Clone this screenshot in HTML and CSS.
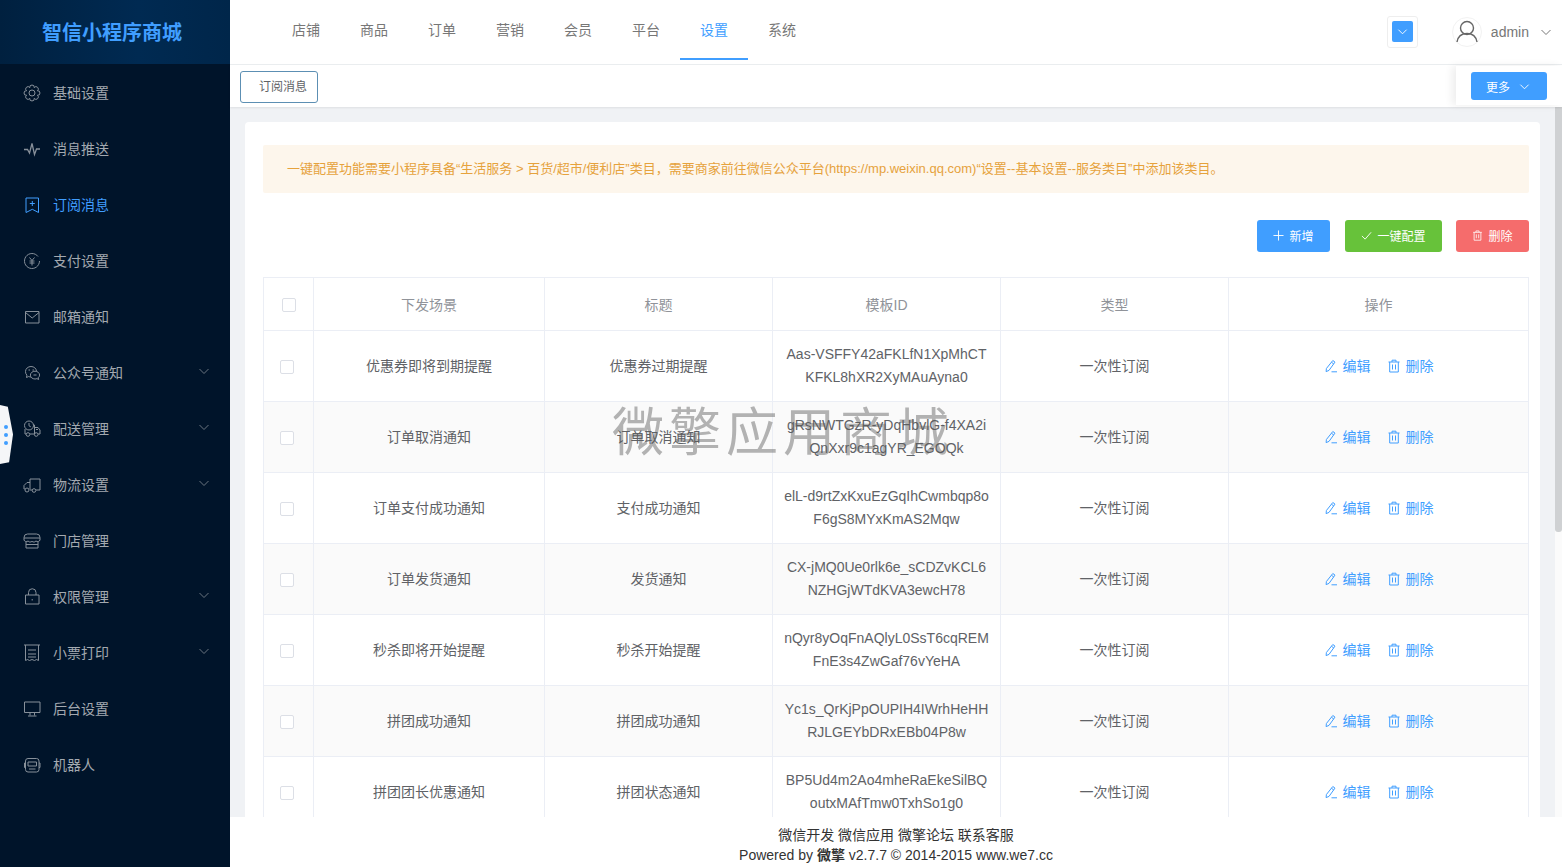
FILE: index.html
```html
<!DOCTYPE html>
<html lang="en">
<head>
    <meta charset="UTF-8">
    <title>订阅消息</title>
    <link rel="stylesheet" href="styles.css">
</head>
<body>
    <!-- Shared icons -->
    <svg class="defs" width="0" height="0">
        <symbol id="i-chev" viewBox="0 0 12 12"><path d="M1.500 4l4.500 4.500L10.500 4" fill="none" stroke="currentColor"/></symbol>
        <symbol id="i-edit" viewBox="0 0 14 14"><path d="M8.800 1.500l2.200 1.600-6 8.300-2.900 1.200.3-3.100zM7.500 3.300l2.200 1.600M7.500 12.800h5.500" fill="none" stroke="currentColor"/></symbol>
        <symbol id="i-trash" viewBox="0 0 14 14"><path d="M1.500 3h11M5 3V1.200h4V3M2.700 3v10h8.600V3M5.500 5.500v5M8.500 5.500v5" fill="none" stroke="currentColor"/></symbol>
    </svg>

    <!-- Sidebar -->
    <aside class="sidebar">
        <div class="logo">智信小程序商城</div>
        <ul class="side-menu">
            <li class="side-item">
                <svg class="side-icon" viewBox="0 0 18 18"><path d="M6.780 3.640A2.250 2.250 0 1 1 11.220 3.640 2.250 2.250 0 1 1 14.360 6.780 2.250 2.250 0 1 1 14.360 11.220 2.250 2.250 0 1 1 11.220 14.360 2.250 2.250 0 1 1 6.780 14.360 2.250 2.250 0 1 1 3.640 11.220 2.250 2.250 0 1 1 3.640 6.780 2.250 2.250 0 1 1 6.780 3.640z"/><circle cx="9" cy="9" r="3"/></svg>
                <span>基础设置</span>
            </li>
            <li class="side-item">
                <svg class="side-icon" viewBox="0 0 18 18"><path d="M1 9.500h3.500L6.500 13l2.500-9.500 2.500 11 2-5.500H17" stroke-width="1.300"/></svg>
                <span>消息推送</span>
            </li>
            <li class="side-item active">
                <svg class="side-icon" viewBox="0 0 18 18"><path d="M3 2h12.500v14.500l-6.200-3.200L3 16.500zM9.300 5v5M6.800 7.500h5"/></svg>
                <span>订阅消息</span>
            </li>
            <li class="side-item">
                <svg class="side-icon" viewBox="0 0 18 18"><path d="M15 4.500a7.500 7.500 0 1 0 1.500 4.500M6.500 5.500L9 8.500l2.500-3M6.500 9h5M6.500 11h5M9 8.500v5"/></svg>
                <span>支付设置</span>
            </li>
            <li class="side-item">
                <svg class="side-icon" viewBox="0 0 18 18"><path d="M2.500 3.500h13.500v11.500H2.500zM2.500 4.500l6.700 5.500 6.800-5.500"/></svg>
                <span>邮箱通知</span>
            </li>
            <li class="side-item">
                <svg class="side-icon" viewBox="0 0 18 18"><path d="M8 13a5.500 5.500 0 0 1-2.300-.5L3.500 13.500l.4-2.300A5.300 5.300 0 0 1 2.500 7.500C2.500 4.700 5 2.500 8 2.500s5.300 2 5.500 4.600"/><path d="M12 7.200c-2.500 0-4.600 1.700-4.600 3.900s2.100 3.900 4.600 3.900c.7 0 1.300-.1 1.900-.4l1.700.9-.4-1.800c.9-.7 1.400-1.600 1.400-2.600 0-2.200-2.100-3.900-4.600-3.900zM5.500 6h1.500M9.500 6H11M10.500 11h3"/></svg>
                <span>公众号通知</span>
                <svg class="side-chev"><use href="#i-chev"/></svg>
            </li>
            <li class="side-item">
                <svg class="side-icon" viewBox="0 0 18 18"><circle cx="6" cy="5.500" r="4.500"/><path d="M6 3v2.800l1.800 1M2 9v5h1M10 5h1.500v9H7M11.500 7.500H15l2 2.500v4h-2M13 9.500h2"/><circle cx="5" cy="14.500" r="1.800"/><circle cx="13.200" cy="14.500" r="1.800"/></svg>
                <span>配送管理</span>
                <svg class="side-chev"><use href="#i-chev"/></svg>
            </li>
            <li class="side-item">
                <svg class="side-icon" viewBox="0 0 18 18"><path d="M7 13.500V3h10v11H13M9.500 14H7M7 6.500H4L1 9.500V13h.8"/><circle cx="4" cy="14" r="2"/><circle cx="11" cy="14.500" r="1.800"/></svg>
                <span>物流设置</span>
                <svg class="side-chev"><use href="#i-chev"/></svg>
            </li>
            <li class="side-item">
                <svg class="side-icon" viewBox="0 0 18 18"><path d="M4.500 2h9A3.500 3.500 0 0 1 17 5.500V8a2.500 2.500 0 0 1-4 1 3 3 0 0 1-4 .5A3 3 0 0 1 5 9a2.500 2.500 0 0 1-4-1V5.500A3.500 3.500 0 0 1 4.500 2zM3 10v6h12v-6M3 12.500h12M1 6h16"/></svg>
                <span>门店管理</span>
            </li>
            <li class="side-item">
                <svg class="side-icon" viewBox="0 0 18 18"><path d="M2.500 7h13.500v9H2.500zM5.500 7V4.500a3.700 3.700 0 0 1 7.500 0V7M9.200 11v1.500"/></svg>
                <span>权限管理</span>
                <svg class="side-chev"><use href="#i-chev"/></svg>
            </li>
            <li class="side-item">
                <svg class="side-icon" viewBox="0 0 18 18"><path d="M1 1h16M2.500 1v15.500l2-1 2 1 2.500-1 2.500 1 2-1 2 1V1M5 6h8M5 10h8M5 13h8"/></svg>
                <span>小票打印</span>
                <svg class="side-chev"><use href="#i-chev"/></svg>
            </li>
            <li class="side-item">
                <svg class="side-icon" viewBox="0 0 18 18"><path d="M1.500 2h15.500v10.500H1.500zM7 12.500v3M11.500 12.500v3M5 16h8.500"/></svg>
                <span>后台设置</span>
            </li>
            <li class="side-item">
                <svg class="side-icon" viewBox="0 0 18 18"><path d="M5 2.500h8.500a2.500 2.500 0 0 1 2.500 2.500v8.500a2.500 2.500 0 0 1-2.500 2.500H5a2.500 2.500 0 0 1-2.500-2.500V5A2.500 2.500 0 0 1 5 2.500zM2.500 7H1.500v4.500h1M16 7h1v4.500h-1M5 6h8.500v4H5zM7 8h.1M11.500 8h.1M6 13h6.500"/></svg>
                <span>机器人</span>
            </li>
        </ul>
    </aside>

    <!-- Slide out handle -->
    <div class="handle"><i></i><i></i><i></i></div>

    <div class="main">
        <!-- Top nav -->
        <header class="topbar">
            <nav class="top-nav">
                <a>店铺</a>
                <a>商品</a>
                <a>订单</a>
                <a>营销</a>
                <a>会员</a>
                <a>平台</a>
                <a class="current">设置</a>
                <a>系统</a>
            </nav>
            <div class="top-right">
                <div class="expand-box"><span class="expand-btn"><svg class="chev-sm"><use href="#i-chev"/></svg></span></div>
                <div class="avatar">
                    <svg viewBox="0 0 30 30" width="30" height="30"><circle cx="15" cy="11" r="6.500"/><path d="M5 25c1-6 5-8.500 10-8.500S24 19 25 25"/></svg>
                </div>
                <span class="username">admin</span>
                <svg class="user-chev"><use href="#i-chev"/></svg>
            </div>
        </header>

        <!-- Tabs -->
        <div class="tabbar">
            <button class="tab">订阅消息</button>
            <div class="more-wrap">
                <button class="more-btn">更多<svg class="chev-sm"><use href="#i-chev"/></svg></button>
            </div>
        </div>

        <!-- Content -->
        <div class="content">
            <div class="card">
                <div class="alert">一键配置功能需要小程序具备“生活服务 &gt; 百货/超市/便利店”类目，需要商家前往微信公众平台(https://mp.weixin.qq.com)“设置--基本设置--服务类目”中添加该类目。</div>
                <div class="toolbar">
                    <button class="btn btn-blue"><svg viewBox="0 0 12 12"><path d="M6 .5v11M.5 6h11"/></svg>新增</button>
                    <button class="btn btn-green"><svg viewBox="0 0 12 12"><path d="M1 6.500l3.500 3.500L11 2.500"/></svg>一键配置</button>
                    <button class="btn btn-red"><svg viewBox="0 0 14 14"><path d="M1.500 3h11M5 3V1.200h4V3M2.700 3v10h8.600V3M5.500 5.500v5M8.500 5.500v5"/></svg>删除</button>
                </div>
                <table class="grid">
                    <colgroup>
                        <col class="col-check">
                        <col class="col-scene">
                        <col class="col-title">
                        <col class="col-id">
                        <col class="col-type">
                        <col class="col-op">
                    </colgroup>
                    <thead>
                        <tr>
                            <th class="head-check"><span class="check"></span></th>
                            <th>下发场景</th>
                            <th>标题</th>
                            <th>模板ID</th>
                            <th>类型</th>
                            <th>操作</th>
                        </tr>
                    </thead>
                    <tbody>
                        <tr>
                            <td class="cell-check"><span class="check"></span></td>
                            <td>优惠券即将到期提醒</td>
                            <td>优惠券过期提醒</td>
                            <td>Aas-VSFFY42aFKLfN1XpMhCT<br>KFKL8hXR2XyMAuAyna0</td>
                            <td>一次性订阅</td>
                            <td class="ops"><a><svg><use href="#i-edit"/></svg>编辑</a><a><svg><use href="#i-trash"/></svg>删除</a></td>
                        </tr>
                        <tr>
                            <td class="cell-check"><span class="check"></span></td>
                            <td>订单取消通知</td>
                            <td>订单取消通知</td>
                            <td>gRsNWTGzR-yDqHbvlG-f4XA2i<br>QnXxr9c1agYR_EGOQk</td>
                            <td>一次性订阅</td>
                            <td class="ops"><a><svg><use href="#i-edit"/></svg>编辑</a><a><svg><use href="#i-trash"/></svg>删除</a></td>
                        </tr>
                        <tr>
                            <td class="cell-check"><span class="check"></span></td>
                            <td>订单支付成功通知</td>
                            <td>支付成功通知</td>
                            <td>elL-d9rtZxKxuEzGqIhCwmbqp8o<br>F6gS8MYxKmAS2Mqw</td>
                            <td>一次性订阅</td>
                            <td class="ops"><a><svg><use href="#i-edit"/></svg>编辑</a><a><svg><use href="#i-trash"/></svg>删除</a></td>
                        </tr>
                        <tr>
                            <td class="cell-check"><span class="check"></span></td>
                            <td>订单发货通知</td>
                            <td>发货通知</td>
                            <td>CX-jMQ0Ue0rlk6e_sCDZvKCL6<br>NZHGjWTdKVA3ewcH78</td>
                            <td>一次性订阅</td>
                            <td class="ops"><a><svg><use href="#i-edit"/></svg>编辑</a><a><svg><use href="#i-trash"/></svg>删除</a></td>
                        </tr>
                        <tr>
                            <td class="cell-check"><span class="check"></span></td>
                            <td>秒杀即将开始提醒</td>
                            <td>秒杀开始提醒</td>
                            <td>nQyr8yOqFnAQlyL0SsT6cqREM<br>FnE3s4ZwGaf76vYeHA</td>
                            <td>一次性订阅</td>
                            <td class="ops"><a><svg><use href="#i-edit"/></svg>编辑</a><a><svg><use href="#i-trash"/></svg>删除</a></td>
                        </tr>
                        <tr>
                            <td class="cell-check"><span class="check"></span></td>
                            <td>拼团成功通知</td>
                            <td>拼团成功通知</td>
                            <td>Yc1s_QrKjPpOUPIH4IWrhHeHH<br>RJLGEYbDRxEBb04P8w</td>
                            <td>一次性订阅</td>
                            <td class="ops"><a><svg><use href="#i-edit"/></svg>编辑</a><a><svg><use href="#i-trash"/></svg>删除</a></td>
                        </tr>
                        <tr>
                            <td class="cell-check"><span class="check"></span></td>
                            <td>拼团团长优惠通知</td>
                            <td>拼团状态通知</td>
                            <td>BP5Ud4m2Ao4mheRaEkeSilBQ<br>outxMAfTmw0TxhSo1g0</td>
                            <td>一次性订阅</td>
                            <td class="ops"><a><svg><use href="#i-edit"/></svg>编辑</a><a><svg><use href="#i-trash"/></svg>删除</a></td>
                        </tr>
                    </tbody>
                </table>
            </div>
            <div class="scrollbar"><span></span></div>
        </div>

        <!-- Footer -->
        <footer class="footer">
            <div>微信开发 微信应用 微擎论坛 联系客服</div>
            <div>Powered by <b>微擎</b> v2.7.7 © 2014-2015 www.we7.cc</div>
        </footer>
    </div>

    <div class="watermark">微擎应用商城</div>
</body>
</html>
```

FILE: styles.css
```css
/* Page */
*{
    box-sizing: border-box;
}
html, body{
    height: 100%;
}
body{
    margin: 0;
    display: flex;
    overflow: hidden;
    font-family: "Liberation Sans", "Noto Sans CJK SC", sans-serif;
    font-size: 14px;
    color: #606266;
    background-color: #fff;
}
.defs{
    position: absolute;
}
button{
    font-family: inherit;
    cursor: pointer;
}

/* Sidebar */
.sidebar{
    width: 230px;
    flex: none;
    background-color: #00142a;
}
.logo{
    height: 64px;
    margin-bottom: 1px;
    padding: 0 6px 2px 0;
    display: flex;
    align-items: center;
    justify-content: center;
    font-size: 20px;
    font-weight: bold;
    color: #409eff;
    background: linear-gradient(90deg, #00203f, #002a52 60%, #00264a);
}
.side-menu{
    list-style: none;
    margin: 0;
    padding: 0;
}
.side-item{
    height: 56px;
    display: flex;
    align-items: center;
    padding-left: 23px;
    color: #a3a9b0;
}
.side-item span{
    margin-top: -2px;
}
.side-item.active{
    color: #409eff;
}
.side-icon{
    width: 18px;
    height: 18px;
    margin-right: 12px;
    fill: none;
    stroke: #87909a;
    stroke-width: 1;
}
.active .side-icon{
    stroke: #409eff;
}
.side-chev{
    width: 12px;
    height: 12px;
    margin-left: auto;
    margin-right: 20px;
    margin-top: -4px;
    color: #6b7580;
}

/* Handle on the left edge */
.handle{
    position: absolute;
    left: 0;
    top: 405px;
    width: 13px;
    height: 59px;
    display: flex;
    flex-direction: column;
    align-items: center;
    justify-content: center;
    gap: 4px;
    padding-right: 2px;
    background-color: #f5f6f8;
    clip-path: polygon(0 0, 60% 3%, 100% 50%, 70% 97%, 0 100%);
}
.handle i{
    width: 4px;
    height: 4px;
    border-radius: 50%;
    background-color: #409eff;
}

/* Main column */
.main{
    flex: 1;
    min-width: 0;
    display: flex;
    flex-direction: column;
}

/* Top bar */
.topbar{
    height: 65px;
    flex: none;
    display: flex;
    justify-content: space-between;
    border-bottom: 1px solid #ebeef0;
}
.top-nav{
    display: flex;
    padding-left: 42px;
}
.top-nav a{
    width: 68px;
    height: 60px;
    line-height: 60px;
    text-align: center;
    color: #777;
}
.top-nav a.current{
    color: #409eff;
    border-bottom: 2px solid #409eff;
}
.top-right{
    display: flex;
    align-items: center;
    padding-right: 10px;
}
.expand-box{
    width: 31px;
    height: 32px;
    padding: 4px;
    margin-right: 34px;
    margin-top: -1px;
    border: 1px solid #eee;
    border-radius: 3px;
}
.expand-btn{
    display: flex;
    align-items: center;
    justify-content: center;
    width: 21px;
    height: 21px;
    border-radius: 2px;
    background-color: #409eff;
    color: #fff;
}
.chev-sm{
    width: 11px;
    height: 11px;
}
.avatar{
    width: 30px;
    height: 30px;
    margin-right: 9px;
    border-radius: 50%;
    border: 1px solid #f2f2f2;
}
.avatar svg{
    margin: -1px;
    fill: none;
    stroke: #666;
    stroke-width: 1.400;
}
.username{
    color: #777;
}
.user-chev{
    width: 12px;
    height: 12px;
    margin-left: 11px;
    color: #777;
}

/* Tabs */
.tabbar{
    height: 42px;
    flex: none;
    display: flex;
    justify-content: space-between;
    align-items: flex-start;
    padding: 6px 0 0 10px;
    box-shadow: 0 1px 2px rgba(0, 0, 0, 0.08);
    position: relative;
}
.tab{
    width: 78px;
    height: 32px;
    padding: 0 0 4px 8px;
    font-size: 12px;
    color: #606266;
    background-color: #fff;
    border: 1px solid #5c8fb3;
    border-radius: 3px;
}
.more-wrap{
    width: 106px;
    height: 39px;
    margin-top: -5px;
    padding: 6px 15px 0;
    background-color: #fff;
    box-shadow: -4px 0 8px rgba(0, 0, 0, 0.07);
}
.more-btn{
    width: 76px;
    height: 28px;
    padding: 0 2px 0 0;
    display: flex;
    align-items: center;
    justify-content: center;
    gap: 9px;
    font-size: 12px;
    color: #fff;
    background-color: #409eff;
    border: none;
    border-radius: 3px;
}

/* Content area */
.content{
    flex: 1;
    min-height: 0;
    overflow: hidden;
    display: flex;
    justify-content: space-between;
    padding: 15px 0 0 15px;
    background-color: #f0f2f5;
}
.card{
    width: 1295px;
    flex: none;
    padding: 23px 11px 0 18px;
    background-color: #fff;
    border-radius: 4px 4px 0 0;
}
.scrollbar{
    width: 7px;
    margin-top: -15px;
    background-color: #fbfbfb;
}
.scrollbar span{
    display: block;
    height: 425px;
    border-radius: 0 0 3px 3px;
    background-color: #cfd1d3;
}
.alert{
    height: 48px;
    line-height: 48px;
    padding-left: 24px;
    font-size: 13px;
    color: #e6a23c;
    background-color: #fdf6ec;
    border-radius: 2px;
    white-space: nowrap;
}
.toolbar{
    display: flex;
    justify-content: flex-end;
    gap: 15px;
    margin: 27px 0 25px;
}
.btn{
    height: 32px;
    padding: 0 0 2px;
    display: flex;
    align-items: center;
    justify-content: center;
    gap: 5px;
    font-size: 12px;
    color: #fff;
    border: none;
    border-radius: 3px;
}
.btn svg{
    width: 11px;
    height: 11px;
    fill: none;
    stroke: currentColor;
}
.btn-blue{
    width: 73px;
    background-color: #409eff;
}
.btn-green{
    width: 97px;
    background-color: #67c23a;
}
.btn-red{
    width: 73px;
    margin-left: -1px;
    background-color: #f56c6c;
}

/* Table */
.grid{
    width: 1265px;
    table-layout: fixed;
    border-collapse: collapse;
    border: 1px solid #ebeef5;
}
.col-check{ width: 50px; }
.col-scene{ width: 231px; }
.col-title{ width: 228px; }
.col-id{ width: 228px; }
.col-type{ width: 228px; }
.col-op{ width: 300px; }
.grid th, .grid td{
    padding: 12px 10px;
    text-align: center;
    border: 1px solid #ebeef5;
}
.grid td{
    height: 71px;
    line-height: 23px;
}
.grid th{
    height: 53px;
    font-weight: normal;
    color: #909399;
}
.grid tbody tr:nth-child(even){
    background-color: #fafafa;
}
.grid .head-check{
    padding: 0;
}
.grid td.cell-check{
    padding: 0 3px 0 0;
}
.check{
    display: inline-block;
    width: 14px;
    height: 14px;
    vertical-align: middle;
    border: 1px solid #dcdfe6;
    border-radius: 2px;
    background-color: #fff;
}
.ops a{
    display: inline-flex;
    align-items: center;
    vertical-align: top;
    gap: 5px;
    margin: 0 8px;
    color: #409eff;
}
.ops svg{
    width: 14px;
    height: 14px;
}

/* Footer */
.footer{
    height: 50px;
    flex: none;
    padding-top: 8px;
    text-align: center;
    line-height: 20px;
    color: #333;
    background-color: #fff;
}

/* Watermark lies over the table */
.watermark{
    position: absolute;
    left: 612px;
    top: 397px;
    font-size: 52px;
    line-height: 72px;
    letter-spacing: 5px;
    color: rgba(90, 90, 90, 0.45);
    pointer-events: none;
    white-space: nowrap;
}
```
